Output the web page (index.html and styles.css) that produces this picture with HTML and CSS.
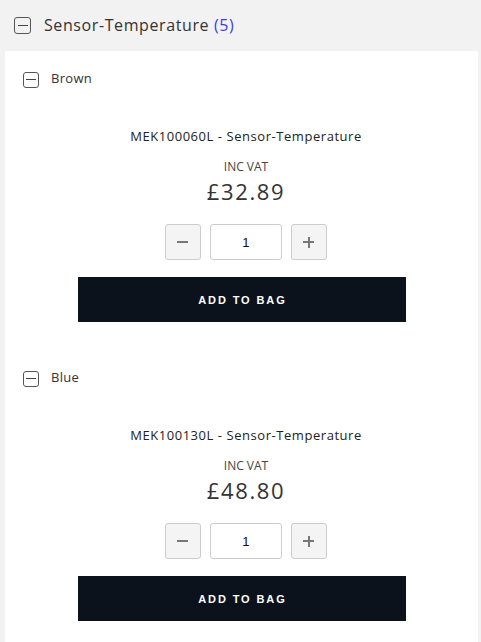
FILE: index.html
```html
<!DOCTYPE html>
<html lang="en">
<head>
<meta charset="utf-8">
<title>Sensor-Temperature</title>
<link rel="stylesheet" href="styles.css">
</head>
<body>
<div class="group">
  <div class="group-head">
    <span class="toggle toggle-lg"><span class="bar"></span></span>
    <span class="group-title">Sensor-Temperature <span class="count">(5)</span></span>
  </div>
  <div class="panel">
    <div class="variant">
      <div class="variant-head">
        <span class="toggle"><span class="bar"></span></span>
        <span class="variant-name">Brown</span>
      </div>
      <div class="info">
        <div class="product-name">MEK100060L - Sensor-Temperature</div>
        <div class="vat">INC VAT</div>
        <div class="price">£32.89</div>
        <div class="qty">
          <button class="qty-btn" type="button"><span class="minus"></span></button>
          <div class="qty-input">1</div>
          <button class="qty-btn" type="button"><span class="plus"></span></button>
        </div>
      </div>
      <button class="add" type="button">ADD TO BAG</button>
    </div>
    <div class="variant">
      <div class="variant-head">
        <span class="toggle"><span class="bar"></span></span>
        <span class="variant-name">Blue</span>
      </div>
      <div class="info">
        <div class="product-name">MEK100130L - Sensor-Temperature</div>
        <div class="vat">INC VAT</div>
        <div class="price">£48.80</div>
        <div class="qty">
          <button class="qty-btn" type="button"><span class="minus"></span></button>
          <div class="qty-input">1</div>
          <button class="qty-btn" type="button"><span class="plus"></span></button>
        </div>
      </div>
      <button class="add" type="button">ADD TO BAG</button>
    </div>
  </div>
</div>
</body>
</html>
```
FILE: styles.css
```css
html, body {
  margin: 0;
  padding: 0;
  background: #f2f2f2;
  font-family: "Open Sans", "Noto Sans", sans-serif;
  color: #333;
}
.group-head {
  height: 51px;
  display: flex;
  align-items: center;
  padding-left: 14px;
  gap: 13px;
}
.toggle {
  box-sizing: border-box;
  width: 16px;
  height: 16px;
  border: 1.5px solid #555;
  border-radius: 3px;
  display: flex;
  align-items: center;
  justify-content: center;
  flex: none;
}
.toggle-lg {
  width: 17px;
  height: 17px;
}
.bar {
  width: 10px;
  height: 1.5px;
  background: #444;
}
.group-title {
  font-size: 16px;
  letter-spacing: 0.6px;
  color: #333;
  margin-top: -2px;
}
.count {
  color: #3d3df0;
}
.panel {
  background: #fff;
  margin: 0 3px 0 5px;
}
.variant {
  padding: 20px 0 28px;
  display: flex;
  flex-direction: column;
  align-items: center;
}
.variant-head {
  align-self: stretch;
  display: flex;
  align-items: center;
  gap: 12px;
  padding-left: 18px;
  height: 17px;
}
.variant-name {
  font-size: 13px;
  letter-spacing: 0.3px;
  color: #333;
  margin-top: -3px;
}
.info {
  display: flex;
  flex-direction: column;
  align-items: center;
  padding-left: 9px;
  margin-top: 39px;
}
.product-name {
  font-size: 13px;
  line-height: 18px;
  letter-spacing: 0.55px;
  color: #222;
}
.vat {
  font-size: 12px;
  line-height: 16px;
  margin-top: 14px;
  color: #444;
}
.price {
  font-size: 22px;
  line-height: 28px;
  letter-spacing: 1.6px;
  margin-top: 2px;
  color: #333;
}
.qty {
  display: flex;
  gap: 9px;
  margin-top: 19px;
}
.qty-btn {
  box-sizing: border-box;
  width: 36px;
  height: 36px;
  border: 1px solid #ccc;
  border-radius: 3px;
  background: #f4f4f4;
  padding: 0;
  display: flex;
  align-items: center;
  justify-content: center;
}
.minus, .plus {
  display: block;
  width: 11px;
  height: 1.5px;
  background: #777;
  position: relative;
}
.plus::after {
  content: "";
  position: absolute;
  left: 4.75px;
  top: -4.75px;
  width: 1.5px;
  height: 11px;
  background: #777;
}
.qty-input {
  box-sizing: border-box;
  width: 72px;
  height: 36px;
  border: 1px solid #ccc;
  border-radius: 3px;
  background: #fff;
  display: flex;
  align-items: center;
  justify-content: center;
  font-family: "Liberation Sans", Arial, sans-serif;
  font-size: 13px;
  color: #111;
}
.add {
  margin-top: 17px;
  width: 328px;
  height: 45px;
  border: none;
  background: #0b121c;
  color: #fff;
  font-family: "Liberation Sans", Arial, sans-serif;
  font-size: 11px;
  font-weight: bold;
  letter-spacing: 1.9px;
  padding: 0 0 0 1.9px;
}
```
